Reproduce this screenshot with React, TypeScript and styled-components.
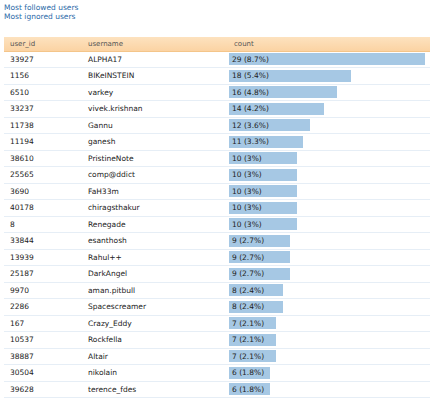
import React from "react";
import styled, { createGlobalStyle } from "styled-components";

const G = createGlobalStyle`
  body { margin: 0; background: #fff; font-family: "DejaVu Sans", Verdana, sans-serif; font-size: 7.5px; color: #222; overflow: hidden; }
`;
const Links = styled.div`
  margin-top: -7px; padding-left: 4px; display: flex; flex-direction: column;
`;
const Link = styled.a`
  color: #2a6aa8; line-height: 9.5px; text-decoration: none; font-size: 7.5px;
`;
const Table = styled.div`
  margin: 15px 4px 0 4px; display: flex; flex-direction: column;
`;
const Head = styled.div`
  display: grid; grid-template-columns: 78px 146px 1fr; height: 14px; align-items: center;
  background: linear-gradient(#fde2bf, #fbd3a3); border-bottom: 1px solid #f4c58a; color: #555; font-size: 7px;
  & > span { padding-left: 6px; }
`;
const Row = styled.div`
  display: grid; grid-template-columns: 78px 146px 1fr; height: 15.5px; align-items: center;
  border-bottom: 1px solid #e6eef6;
  & > span { padding-left: 6px; }
`;
const BarCell = styled.div`
  padding-left: 1px; display: flex;
`;
const Bar = styled.div`
  height: 12px; background: #a6c8e4; display: flex; align-items: center; padding-left: 3px; box-sizing: border-box; white-space: nowrap;
`;

const data: [string, string, number, string][] = [
  ["33927","ALPHA17",29,"8.7%"],["1156","BIKeINSTEIN",18,"5.4%"],["6510","varkey",16,"4.8%"],
  ["33237","vivek.krishnan",14,"4.2%"],["11738","Gannu",12,"3.6%"],["11194","ganesh",11,"3.3%"],
  ["38610","PristineNote",10,"3%"],["25565","comp@ddict",10,"3%"],["3690","FaH33m",10,"3%"],
  ["40178","chiragsthakur",10,"3%"],["8","Renegade",10,"3%"],["33844","esanthosh",9,"2.7%"],
  ["13939","Rahul++",9,"2.7%"],["25187","DarkAngel",9,"2.7%"],["9970","aman.pitbull",8,"2.4%"],
  ["2286","Spacescreamer",8,"2.4%"],["167","Crazy_Eddy",7,"2.1%"],["10537","Rockfella",7,"2.1%"],
  ["38887","Altair",7,"2.1%"],["30504","nikolain",6,"1.8%"],["39628","terence_fdes",6,"1.8%"],
];

export default function App() {
  return (
    <>
      <G />
      <Links>
        <Link>Most active users</Link>
        <Link>Most followed users</Link>
        <Link>Most ignored users</Link>
      </Links>
      <Table>
        <Head><span>user_id</span><span>username</span><span>count</span></Head>
        {data.map(([id, n, c, p]) => (
          <Row key={id}>
            <span>{id}</span><span>{n}</span>
            <BarCell><Bar style={{ width: `${(c / 29) * 196}px` }}>{c} ({p})</Bar></BarCell>
          </Row>
        ))}
      </Table>
    </>
  );
}
